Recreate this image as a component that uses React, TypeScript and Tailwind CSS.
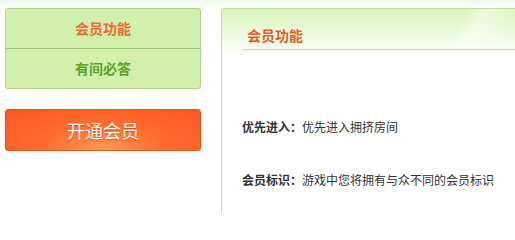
export default function App() {
  return (
    <div
      className="w-[515px] h-[213px] overflow-hidden flex pt-[8px] pl-[5px] bg-[linear-gradient(#eefaea,#ffffff_10px)]"
      style={{ fontFamily: '"Noto Sans CJK SC", "Noto Sans", sans-serif' }}
    >
      {/* Left menu */}
      <div className="w-[196px] shrink-0">
        <div className="border border-[#a8d68a] rounded-[3px] bg-[#d2f0ab]">
          <div className="h-[40px] border-b border-[#9cc97c] flex items-center justify-center text-[14px] font-bold text-[#ec6a32]">
            会员功能
          </div>
          <div className="h-[39px] flex items-center justify-center text-[14px] font-bold text-[#5ca42a]">
            有间必答
          </div>
        </div>
        <button className="mt-[20px] w-full h-[42px] rounded-[3px] border border-[#e8521e] bg-[radial-gradient(ellipse_at_50%_100%,#ff9a4c_0%,#ff6c2e_45%,#fb5622_100%)] text-white text-[18px] [text-shadow:0_1px_1px_rgba(160,40,0,0.5)] flex items-center justify-center">
          开通会员
        </button>
      </div>

      {/* Right panel */}
      <div className="relative ml-[20px] flex-1 min-w-[300px] border-l border-t border-[#c4dca8] rounded-tl-[4px] bg-[linear-gradient(#d8f4b8,#ffffff_48px)] overflow-hidden">
        <div className="absolute top-0 left-[180px] w-[140px] h-[45px] bg-[linear-gradient(120deg,transparent_40%,rgba(255,255,255,0.45)_50%,transparent_75%)]" />
        <div className="relative ml-[20px] pl-[5px] pt-[16px] pb-[4px] leading-[20px] border-b border-[#c8d6b8] text-[14px] font-bold text-[#e45a26]">
          会员功能
        </div>
        <div className="ml-[20px] mt-[67px] text-[12px] leading-[20px] text-[#333333]">
          <span className="font-bold">优先进入：</span>优先进入拥挤房间
        </div>
        <div className="ml-[20px] mt-[33px] text-[12px] leading-[20px] text-[#333333]">
          <span className="font-bold">会员标识：</span>游戏中您将拥有与众不同的会员标识
        </div>
      </div>
    </div>
  );
}
